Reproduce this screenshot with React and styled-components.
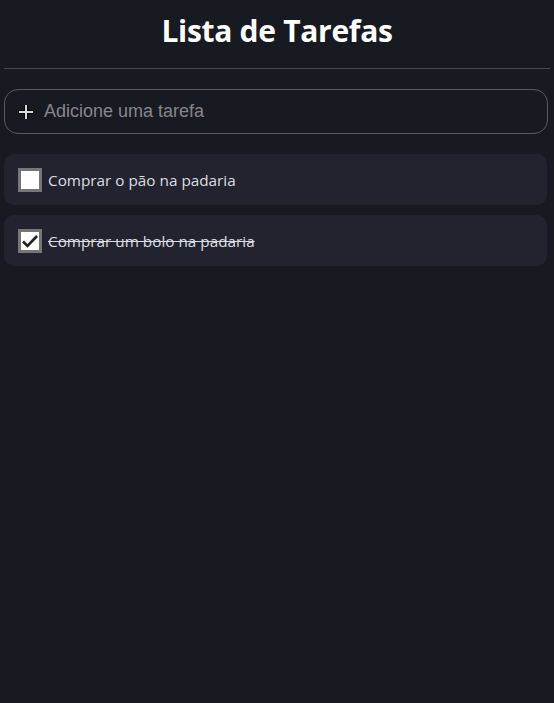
import React, { useState } from "react";
import styled, { createGlobalStyle } from "styled-components";

const Global = createGlobalStyle`
  html, body { margin: 0; padding: 0; background: #181a22; }
  body { font-family: "Open Sans", "Noto Sans", sans-serif; color: #fff; }
  * { box-sizing: border-box; }
`;

const Page = styled.div`
  min-height: 703px;
  padding: 0 4px;
  display: flex;
  flex-direction: column;
`;

const Title = styled.h1`
  margin: 0;
  height: 60px;
  display: flex;
  align-items: center;
  justify-content: center;
  font-family: "Open Sans", sans-serif;
  font-size: 30px;
  font-weight: 700;
  color: #fff;
  letter-spacing: -0.3px;
`;

const Divider = styled.hr`
  margin: 8px 0 20px;
  border: none;
  border-top: 1px solid #4a4b52;
`;

const InputBox = styled.label`
  display: flex;
  align-items: center;
  gap: 10px;
  height: 45px;
  width: 544px;
  padding: 0 12px 0 13px;
  border: 1px solid #5a5b62;
  border-radius: 14px;
  background: #181a22;
`;

const Input = styled.input`
  flex: 1;
  border: none;
  outline: none;
  background: transparent;
  font-family: "Liberation Sans", Arial, sans-serif;
  font-size: 18px;
  color: #ddd;
  padding: 0;
  &::placeholder { color: #85868c; }
`;

const List = styled.ul`
  list-style: none;
  margin: 20px 0 0;
  padding: 0;
  display: flex;
  flex-direction: column;
  gap: 10px;
  width: 543px;
`;

const Item = styled.li`
  display: flex;
  align-items: center;
  gap: 6px;
  height: 51px;
  padding: 0 14px;
  background: #22232f;
  border-radius: 10px;
`;

const Box = styled.span`
  width: 24px;
  height: 24px;
  flex: none;
  display: flex;
  align-items: center;
  justify-content: center;
  background: #fff;
  border: 3px solid #767676;
`;

const Text = styled.span`
  font-family: "Open Sans", sans-serif;
  font-size: 15.3px;
  color: #dcdde2;
  text-decoration: ${(p) => (p.$done ? "line-through" : "none")};
`;

const tasks = [
  { text: "Comprar o pão na padaria", done: false },
  { text: "Comprar um bolo na padaria", done: true },
];

export default function App() {
  const [value, setValue] = useState("");
  return (
    <>
      <Global />
      <Page>
        <Title>Lista de Tarefas</Title>
        <Divider />
        <InputBox>
          <svg width="16" height="16" viewBox="0 0 16 16">
            <path d="M8 1v14M1 8h14" stroke="#000" strokeWidth="3.5" />
            <path d="M8 1v14M1 8h14" stroke="#d8d8d8" strokeWidth="2" />
          </svg>
          <Input
            placeholder="Adicione uma tarefa"
            value={value}
            onChange={(e) => setValue(e.target.value)}
          />
        </InputBox>
        <List>
          {tasks.map((t) => (
            <Item key={t.text}>
              <Box>
                {t.done && (
                  <svg width="18" height="18" viewBox="0 0 18 18">
                    <path d="M2 9.5l4.5 4.5L16 4" fill="none" stroke="#222" strokeWidth="2.6" />
                  </svg>
                )}
              </Box>
              <Text $done={t.done}>{t.text}</Text>
            </Item>
          ))}
        </List>
      </Page>
    </>
  );
}
